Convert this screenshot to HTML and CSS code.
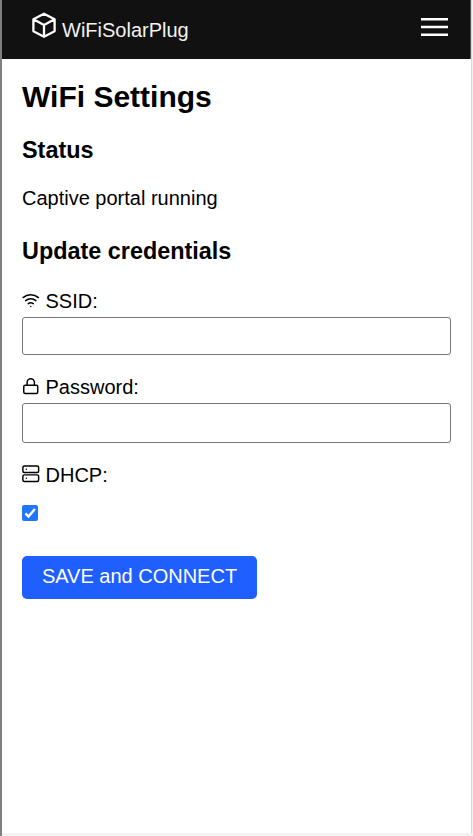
FILE: index.html
```html
<!DOCTYPE html>
<html lang="en">
<head>
<meta charset="utf-8">
<title>WiFiSolarPlug</title>
<link rel="stylesheet" href="styles.css">
</head>
<body>
<div class="frame">
  <div class="page">
    <header class="topbar">
      <a class="brand">
        <svg class="brand-icon" viewBox="0 0 24 26" fill="none" stroke="currentColor" stroke-width="2.3" stroke-linejoin="round" stroke-linecap="round"><path d="M12 1.7 22.6 7.2v12L12 24.8 1.4 19.2v-12zM1.4 7.2 12 13 22.6 7.2M12 13v11.8"/></svg>
        <span>WiFiSolarPlug</span>
      </a>
      <svg class="menu" viewBox="0 0 27 20"><path d="M0 2.2h27M0 10h27M0 17.8h27"/></svg>
    </header>
    <main class="content">
      <h1>WiFi Settings</h1>
      <h2>Status</h2>
      <p>Captive portal running</p>
      <h2 class="update">Update credentials</h2>
      <form>
        <label for="ssid"><svg viewBox="0 0 24 24"><path d="M5 12.9a11 11 0 0 1 14.08 0M1.42 8.7a16 16 0 0 1 21.16 0M8.53 17a6 6 0 0 1 6.95 0M12 21h.01"/></svg><span>SSID:</span></label>
        <input class="text" id="ssid" type="text">
        <label class="pass-label" for="pass"><svg viewBox="0 0 24 24"><rect x="2.4" y="11" width="19.2" height="11.3" rx="2"/><path d="M7 11V7a5 5 0 0 1 10 0v4"/></svg><span>Password:</span></label>
        <input class="text tall" id="pass" type="password">
        <label class="dhcp-label" for="dhcp"><svg viewBox="0 0 24 24"><rect x="1.2" y="1" width="21.6" height="9" rx="2"/><rect x="1.2" y="13.2" width="21.6" height="9" rx="2"/><path d="M6 5.5h.01M6 17.7h.01"/></svg><span>DHCP:</span></label>
        <span class="check" id="dhcp" role="checkbox" aria-checked="true"><svg viewBox="0 0 16 16"><path d="M3.4 8.4 6.5 11.5 12.9 3.9"/></svg></span>
        <button type="button">SAVE and CONNECT</button>
      </form>
    </main>
  </div>
</div>
</body>
</html>
```
FILE: styles.css
```css
* { box-sizing: border-box; }
body {
  margin: 0;
  background: #f2f2f2;
  color: #000;
  font: 20px/24px "Liberation Sans", Arial, sans-serif;
}
.frame {
  height: 836px;
  border-left: 2px solid #808080;
  padding: 0 1px 3px 0;
}
.page {
  height: 833px;
  background: #fff;
  border-right: 1px solid #d8d8d8;
}
.topbar {
  display: flex;
  justify-content: space-between;
  height: 59px;
  padding: 12px 22px 0 30px;
  background: #111;
  border-right: 1px solid #555;
  color: #fff;
}
.brand { display: flex; gap: 6px; color: #f2f2f2; }
.brand span { margin-top: 6px; }
.brand-icon { width: 24px; height: 26px; color: #fff; }
.menu {
  width: 27px;
  height: 20px;
  margin-top: 5px;
  stroke: #fff;
  stroke-width: 2.6;
}
.content { padding: 20px 20px 0; }
h1, h2, p { margin: 0; }
h1 { font-size: 30px; line-height: 36px; }
h2 { margin-top: 21px; font-size: 23.4px; line-height: 28px; }
p { margin-top: 22px; }
.update { margin-top: 27px; }
form { display: flex; flex-direction: column; align-items: flex-start; padding-top: 24px; }
label { display: flex; gap: 6px; }
label svg {
  width: 17.5px;
  height: 18px;
  margin-top: 1.75px;
  fill: none;
  stroke: currentColor;
  stroke-width: 2;
  stroke-linecap: round;
  stroke-linejoin: round;
}
.text {
  width: 100%;
  height: 38px;
  margin: 4px 0 0;
  border: 1px solid #767676;
  border-radius: 3px;
}
.tall { height: 40px; }
.pass-label { margin-top: 20px; }
.dhcp-label { margin-top: 20px; }
.check {
  width: 16px;
  height: 16px;
  margin-top: 18.4px;
  border-radius: 2px;
  background: #2176ff;
}
.check svg { display: block; fill: none; stroke: #fff; stroke-width: 2.4; }
button {
  width: 235px;
  height: 42.6px;
  margin-top: 35px;
  padding: 0 0 3px;
  border: 0;
  border-radius: 5px;
  background: #1f5eff;
  color: #fff;
  font: inherit;
}
```
